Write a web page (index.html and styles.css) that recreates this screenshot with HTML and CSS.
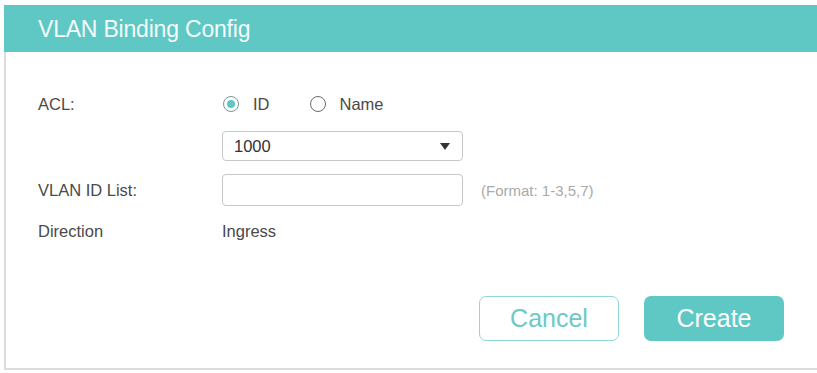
FILE: index.html
```html
<!DOCTYPE html>
<html lang="en">
<head>
  <meta charset="UTF-8">
  <title>VLAN Binding Config</title>
  <link rel="stylesheet" href="styles.css">
</head>
<body>
  <div class="dialog">
    <div class="dialog-header">VLAN Binding Config</div>
    <div class="dialog-body">
      <div class="form-row">
        <label class="form-label">ACL:</label>
        <div class="radio-group">
          <span class="radio checked"></span><span class="radio-text">ID</span>
          <span class="radio"></span><span class="radio-text">Name</span>
        </div>
      </div>
      <div class="form-row select-row">
        <span class="form-label"></span>
        <div class="select-box">
          <span>1000</span>
          <span class="select-arrow"></span>
        </div>
      </div>
      <div class="form-row input-row">
        <label class="form-label">VLAN ID List:</label>
        <input type="text" class="text-input">
        <span class="hint">(Format: 1-3,5,7)</span>
      </div>
      <div class="form-row direction-row">
        <span class="form-label">Direction</span>
        <span class="value">Ingress</span>
      </div>
      <div class="buttons">
        <button class="btn btn-cancel">Cancel</button>
        <button class="btn btn-create">Create</button>
      </div>
    </div>
  </div>
</body>
</html>
```
FILE: styles.css
```css
body {
  margin: 0;
  background-color: #fff;
  font-family: "Liberation Sans", Arial, sans-serif;
  color: #4a4a4a;
}
.dialog {
  margin: 5px 0 0 4px;
  border-left: 2px solid #dcdcdc;
  border-bottom: 2px solid #dcdcdc;
  height: 365px;
  box-sizing: border-box;
}
.dialog-header {
  height: 47px;
  margin-left: -2px;
  background-color: #5fc8c4;
  color: #f4fbfb;
  font-size: 23px;
  line-height: 48px;
  padding-left: 34px;
  letter-spacing: -0.2px;
}
.dialog-body {
  padding: 41px 0 0 32px;
}
.form-row {
  display: flex;
  align-items: center;
  font-size: 16.5px;
}
.form-label {
  width: 184px;
  flex-shrink: 0;
}
.radio-group {
  display: flex;
  align-items: center;
  height: 22px;
  margin-left: 1px;
}
.radio {
  width: 14px;
  height: 14px;
  border: 1.5px solid #6a6a6a;
  border-radius: 50%;
  position: relative;
  box-sizing: content-box;
}
.radio.checked {
  border-color: #7a9a98;
}
.radio.checked::after {
  content: "";
  position: absolute;
  left: 3px;
  top: 3px;
  width: 8px;
  height: 8px;
  border-radius: 50%;
  background-color: #5fc8c4;
}
.radio-text {
  margin-left: 14px;
  margin-right: 40px;
}
.select-row {
  margin-top: 16px;
}
.select-box {
  width: 241px;
  height: 30px;
  border: 1px solid #c8c8c8;
  border-radius: 4px;
  box-sizing: border-box;
  display: flex;
  align-items: center;
  justify-content: space-between;
  padding: 0 12px 0 11px;
  color: #333;
}
.select-arrow {
  width: 0;
  height: 0;
  border-left: 5px solid transparent;
  border-right: 5px solid transparent;
  border-top: 7px solid #333;
}
.input-row {
  margin-top: 13px;
}
.text-input {
  width: 241px;
  height: 32px;
  border: 1px solid #c8c8c8;
  border-radius: 4px;
  box-sizing: border-box;
  margin: 0;
}
.hint {
  margin-left: 18px;
  font-size: 15px;
  color: #aaa;
}
.direction-row {
  margin-top: 15px;
  height: 20px;
}
.buttons {
  display: flex;
  justify-content: flex-end;
  gap: 25px;
  margin-top: 55px;
  padding-right: 33px;
}
.btn {
  width: 140px;
  height: 45px;
  border-radius: 7px;
  font-family: "Liberation Sans", Arial, sans-serif;
  font-size: 25px;
  cursor: pointer;
}
.btn-cancel {
  background-color: #fff;
  border: 1.5px solid #8fd8d4;
  color: #6cc9c4;
}
.btn-create {
  background-color: #5fc8c4;
  border: none;
  color: #fff;
}
```
